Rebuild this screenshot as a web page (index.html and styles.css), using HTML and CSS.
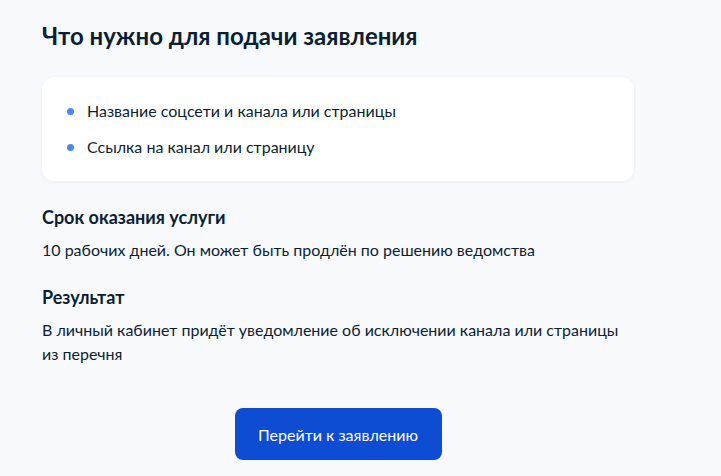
FILE: index.html
```html
<!DOCTYPE html>
<html lang="ru">
<head>
  <meta charset="UTF-8">
  <meta name="viewport" content="width=device-width, initial-scale=1.0">
  <title>Что нужно для подачи заявления</title>
  <link rel="stylesheet" href="styles.css">
</head>
<body>

<div class="service-info">
  <h1>Что нужно для подачи заявления</h1>

  <div class="card">
    <ul class="docs-list">
      <li>Название соцсети и канала или страницы</li>
      <li>Ссылка на канал или страницу</li>
    </ul>
  </div>

  <div class="section">
    <h2>Срок оказания услуги</h2>
    <p>10 рабочих дней. Он может быть продлён по решению ведомства</p>
  </div>

  <div class="section">
    <h2>Результат</h2>
    <p>В личный кабинет придёт уведомление об исключении канала или страницы из перечня</p>
  </div>

  <div class="actions">
    <button class="btn-primary">Перейти к заявлению</button>
  </div>
</div>

</body>
</html>
```

FILE: styles.css
```css
body {
  margin: 0;
  padding: 0;
  background-color: #f8f9fd;
  font-family: Lato, "Open Sans", sans-serif;
  color: #0b1f33;
}

.service-info {
  width: 592px;
  padding: 22px 0 0 42px;
}

h1 {
  margin: 0;
  font-size: 24px;
  line-height: 28px;
  font-weight: 700;
}

.card {
  margin-top: 27px;
  background: #ffffff;
  border-radius: 12px;
  box-shadow: 0 1px 4px rgba(0, 40, 100, 0.06);
  padding: 22px 28px 22px 25px;
}

.docs-list {
  list-style: none;
  margin: 0;
  padding: 0;
}

.docs-list li {
  position: relative;
  padding-left: 20px;
  font-size: 16px;
  line-height: 24px;
}

.docs-list li + li {
  margin-top: 12px;
}

.docs-list li::before {
  content: "";
  position: absolute;
  left: 0;
  top: 9px;
  width: 7px;
  height: 7px;
  border-radius: 50%;
  background: #4c86f0;
}

.section {
  margin-top: 24px;
}

.section + .section {
  margin-top: 23px;
}

h2 {
  margin: 0;
  font-size: 18px;
  line-height: 24px;
  font-weight: 700;
}

.section p {
  margin: 9px 0 0;
  font-size: 16px;
  line-height: 24px;
  max-width: 580px;
}

.actions {
  display: flex;
  justify-content: center;
  margin-top: 42px;
}

.btn-primary {
  font-family: Lato, "Open Sans", sans-serif;
  font-size: 16px;
  color: #ffffff;
  background: #0d4cd3;
  border: none;
  border-radius: 8px;
  width: 207px;
  height: 52px;
  cursor: pointer;
}
```
